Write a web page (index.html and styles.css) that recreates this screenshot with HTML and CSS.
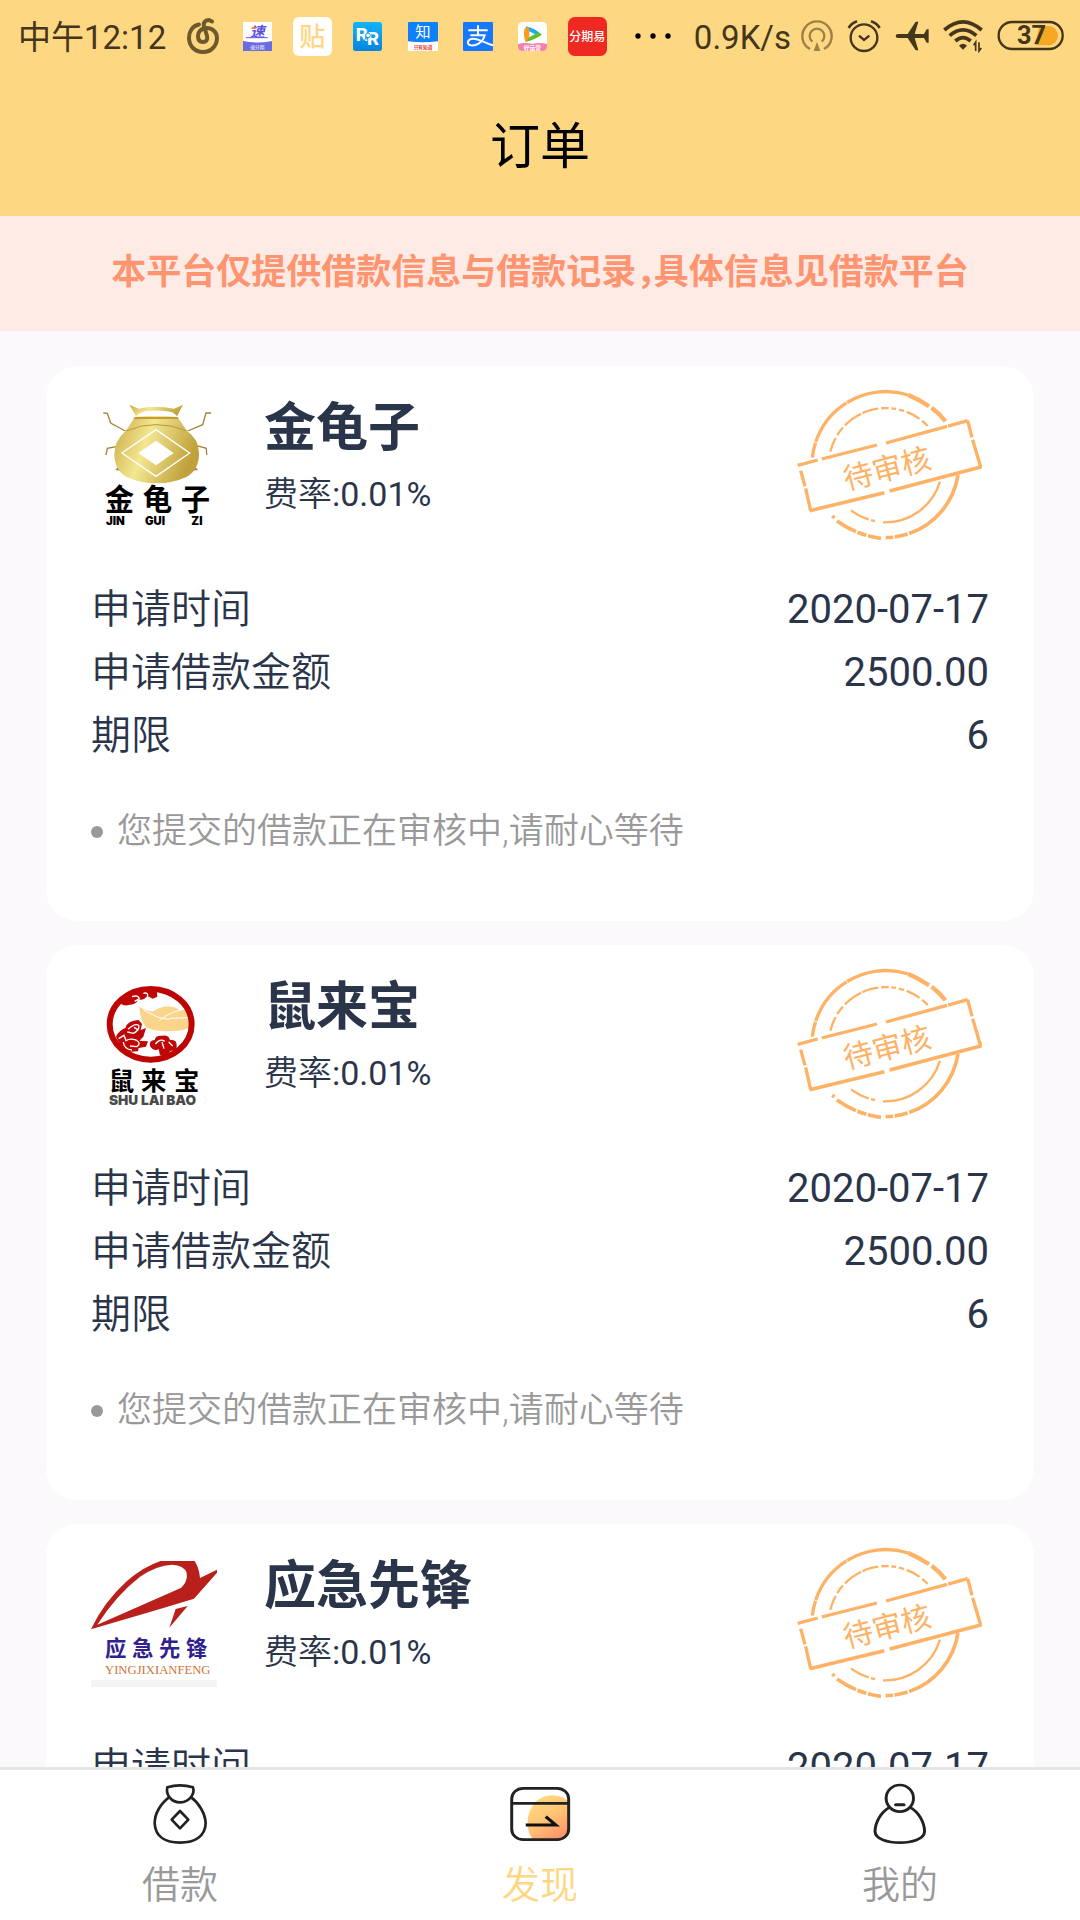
FILE: index.html
```html
<!DOCTYPE html>
<html lang="zh-CN">
<head>
<meta charset="utf-8">
<meta name="viewport" content="width=device-width, initial-scale=1">
<title>订单</title>
<link rel="stylesheet" href="styles.css">
</head>
<body>
<svg class="defs" aria-hidden="true">
  <defs>
    <linearGradient id="gold" x1="0" y1="0" x2="1" y2="0.3">
      <stop offset="0" stop-color="#c9a840"/><stop offset="0.45" stop-color="#f3e792"/><stop offset="1" stop-color="#c0a13c"/>
    </linearGradient>
    <linearGradient id="sun" x1="0.2" y1="0" x2="0.8" y2="1">
      <stop offset="0" stop-color="#ffdc84"/><stop offset="0.5" stop-color="#ffc476"/><stop offset="1" stop-color="#ff9068"/>
    </linearGradient>
    <linearGradient id="sky" x1="0" y1="0" x2="0" y2="1">
      <stop offset="0" stop-color="#12b4fb"/><stop offset="1" stop-color="#0784dc"/>
    </linearGradient>
    <symbol id="stamp" viewBox="60 54 594 468">
      <g fill="none" stroke="#fdb265" stroke-linecap="butt">
        <path d="M124 266A222 222 0 0 1 412 78" stroke-width="10" stroke-dasharray="46 2 152 2 200 3 40"/>
        <path d="M412 78Q445 92 474 112M482 116Q506 134 523 157" stroke-width="13"/>
        <path d="M178 248A172 172 0 0 1 470 171" stroke-width="7" stroke-dasharray="44 10 28 9 60 4 50 9 22 8 14 9 16 8"/>
        <path d="M561 318A222 222 0 0 1 344 506" stroke-width="11" stroke-dasharray="240 5 40 4 90"/>
        <path d="M330 508Q258 499 198 456M190 447L184 441" stroke-width="11" stroke-dasharray="40 5 28 5 70 5"/>
        <path d="M507 338A172 172 0 0 1 336 460" stroke-width="7"/>
        <path d="M312 456Q268 447 236 421" stroke-width="7" stroke-dasharray="12 7 60"/>
        <path d="M80 289L140 273M152 270L318 228M345 222L590 155" stroke-width="10" stroke-dasharray="190 3 90 2"/>
        <path d="M590 155L603 205M605 212L629 294" stroke-width="10"/>
        <path d="M89 305L102 352M104 358L119 425" stroke-width="10"/>
        <path d="M116 425L340 371M356 366L632 293" stroke-width="11" stroke-dasharray="290 2 200 2"/>
      </g>
      <text x="348" y="331" transform="rotate(-14.8 348 298)" text-anchor="middle" font-size="89" fill="#fdb265">待审核</text>
    </symbol>
  </defs>
</svg>

<header class="top">
  <div class="status">
    <span class="status-time">中午12:12</span>
    <ul class="status-apps">
      <li><svg width="32" height="36" viewBox="0 0 32 36"><g fill="none" stroke="#6e592c" stroke-width="4" stroke-linecap="round"><path d="M12 6.500C5 8 2 14 2 20C2 28 8 34 16 34C24 34 30 28 30 20C30 14 25 10 20 10C14 10 11 14 11 18C11 22 13 24 16 24C19 24 21 22 20 18L17 8C16 4 19 2 22 2L25 3.500"/></g></svg></li>
      <li><svg width="29" height="29" viewBox="0 0 87 87"><path fill="#fff" d="M0 0h87v87H0z"/><path fill="#6a6be0" d="M0 57Q43 66 87 57V87H0z"/><text x="22" y="44" font-size="43" font-weight="700" font-style="italic" fill="#5c50e0">速</text><path d="M8 47H74" stroke="#6a58e8" stroke-width="3"/><path d="M26 15h12v6H26z" fill="#f08a3c"/><text x="43" y="80" text-anchor="middle" font-size="14" fill="#fff">速分期</text></svg></li>
      <li><svg width="39" height="39" viewBox="0 0 117 117"><rect width="117" height="117" rx="18" fill="#fff"/><text x="58" y="86" text-anchor="middle" font-size="78" font-weight="500" fill="#fcd885">贴</text></svg></li>
      <li><svg width="29" height="29" viewBox="0 0 87 87"><rect width="87" height="87" rx="8" fill="url(#sky)"/><text x="8" y="58" font-size="56" font-weight="800" fill="#fff">R</text><text x="42" y="70" font-size="56" font-weight="800" fill="#fff">R</text><path d="M30 66L54 12" stroke="#0c9aec" stroke-width="3"/><circle cx="45" cy="40" r="7" fill="#fff" stroke="#0c9aec" stroke-width="3"/></svg></li>
      <li><svg width="30" height="29" viewBox="0 0 90 87"><rect width="90" height="87" rx="3" fill="#0f80f5"/><path d="M0 58Q45 64 90 58V87H0z" fill="#fff"/><text x="45" y="46" text-anchor="middle" font-size="46" fill="#fff">知</text><text x="45" y="80" text-anchor="middle" font-size="14" font-weight="700" fill="#e5372c">只有知道</text></svg></li>
      <li><svg width="30" height="29" viewBox="0 0 90 87"><rect width="90" height="87" rx="4" fill="#1677ff"/><g fill="none" stroke="#fff" stroke-width="6"><path d="M16 25H74M45 10V40M22 40H65C60 62 38 72 24 70C8 67 14 50 30 50C50 50 66 64 90 70"/></g></svg></li>
      <li><svg width="29" height="29" viewBox="0 0 87 87"><rect width="87" height="87" rx="14" fill="#fff"/><path d="M25 13Q18 36 23 54Q45 52 70 37Q48 18 25 13z" fill="#22a9f0"/><path d="M20 18Q15 40 22 59Q30 60 38 53L32 16z" fill="#ff9a1f"/><path d="M24 58Q46 55 72 38L60 31L36 46z" fill="#58c322"/><path d="M34 28V46L51 37z" fill="#fff"/><path d="M0 66Q22 60 43 66Q64 60 87 66V73Q87 87 73 87H14Q0 87 0 73z" fill="#f77fae"/><text x="43" y="83" text-anchor="middle" font-size="17" font-weight="700" fill="#fff">好运营</text></svg></li>
      <li><svg width="39" height="39" viewBox="0 0 117 117"><rect width="117" height="117" rx="20" fill="#ef2922"/><text x="58" y="71" text-anchor="middle" font-size="36" font-weight="500" fill="#fff">分期易</text></svg></li>
    </ul>
    <svg class="status-more" width="36" height="8" viewBox="0 0 108 24"><circle cx="9" cy="12" r="8"/><circle cx="54" cy="12" r="8"/><circle cx="99" cy="12" r="8"/></svg>
    <span class="status-speed">0.9K/s</span>
    <div class="status-system">
      <svg width="32" height="32" viewBox="0 0 96 96" fill="none" stroke="#9b8146" stroke-width="7"><path d="M27 87A44 44 0 1 1 69 87"/><path d="M34 65A22 22 0 1 1 62 65"/><path d="M48 66L58 93H38z" fill="#9b8146" stroke="none"/></svg>
      <svg width="34" height="34" viewBox="0 0 102 102" fill="none" stroke="#43361b" stroke-width="7"><circle cx="51" cy="56" r="40"/><path d="M36 50L51 63L67 50"/><path d="M5 27Q14 12 30 7M72 7Q89 12 98 27" stroke-width="8"/></svg>
      <svg width="34" height="30" viewBox="0 0 102 90" fill="#43361b"><path d="M2 45Q2 39 9 39H38L62 2H70L59 39H87L95 25H101V65H95L87 51H59L70 88H62L38 51H9Q2 51 2 45z"/></svg>
      <svg width="40" height="34" viewBox="0 0 120 102" fill="none" stroke="#43361b" stroke-width="11"><path d="M4 33Q60 -16 116 33M20 50Q60 15 100 50M37 66Q60 46 83 66"/><path d="M48 80Q60 68 72 80L60 92z" fill="#43361b" stroke="none"/><path d="M98 96V70L92 79M108 70V96L115 87" stroke-width="5"/></svg>
      <svg width="68" height="32" viewBox="0 0 204 96"><path d="M126 18H154A29 29 0 0 1 154 76H116z" fill="#f6a723"/><rect x="5" y="6" width="192" height="81" rx="40" fill="none" stroke="#43361b" stroke-width="7"/><text x="60" y="73" font-size="76" font-weight="700" fill="#43361b">37</text></svg>
    </div>
  </div>
  <h1 class="title">订单</h1>
</header>

<p class="notice">本平台仅提供借款信息与借款记录<span class="half">，</span>具体信息见借款平台</p>

<main class="orders">
  <article class="card">
    <div class="card-head">
      <svg class="logo" viewBox="153 132 378 378" role="img" aria-label="金龟子">
        <g fill="none" stroke="#a4843a" stroke-width="4"><path d="M190 162L202 163L212 192L256 216M513 162H498L488 197L443 216M198 288L202 268L232 262M500 288L499 268L470 260"/></g>
        <path d="M226 333L240 318L246 336zM474 333L460 318L454 336z" fill="#a4843a"/>
        <path d="M268 137L296 149Q348 137 402 149L429 137L411 172Q402 158 380 157Q348 152 318 157Q300 160 288 172z" fill="url(#gold)"/>
        <path d="M285 174Q348 168 413 174L440 215Q477 240 477 284Q477 334 437 355Q398 373 350 373Q300 373 262 355Q223 334 223 284Q223 245 258 215z" fill="url(#gold)"/>
        <path d="M284 174H414V180H280z" fill="#c79b2f"/>
        <path d="M258 216Q345 178 440 215" fill="none" stroke="#b89b3c" stroke-width="3"/>
        <path d="M348 212L449 282L348 352L246 282z" fill="none" stroke="#fff" stroke-width="4"/>
        <path d="M348 245L401 282L348 319L295 282z" fill="#fff"/>
        <text x="194 308 422" y="453" font-size="88" font-weight="700">金龟子</text>
        <g font-family="Inter" font-weight="900" font-size="34"><text x="198" y="497">JIN</text><text x="315" y="497">GUI</text><text x="454" y="497">ZI</text></g>
      </svg>
      <div class="info">
        <h2 class="name">金龟子</h2>
        <p class="rate">费率<span class="figure">:0.01%</span></p>
      </div>
      <svg class="stamp" role="img" aria-label="待审核"><use href="#stamp"/></svg>
    </div>
    <dl class="details">
      <div class="row"><dt>申请时间</dt><dd>2020-07-17</dd></div>
      <div class="row"><dt>申请借款金额</dt><dd>2500.00</dd></div>
      <div class="row"><dt>期限</dt><dd>6</dd></div>
    </dl>
    <p class="hint">您提交的借款正在审核中,请耐心等待</p>
  </article>

  <article class="card">
    <div class="card-head">
      <svg class="logo" viewBox="153 126 378 378" role="img" aria-label="鼠来宝">
        <path d="M298 200Q315 212 340 214Q358 200 385 199Q408 200 420 212L450 206V262Q430 274 395 273Q345 276 318 262Q300 240 298 200z" fill="#fad48b"/>
        <path d="M310 210L352 231L388 239M420 210Q380 222 358 242M388 235L445 233" fill="none" stroke="#fff" stroke-width="3"/>
        <ellipse cx="332" cy="253" rx="123" ry="106" fill="none" stroke="#be0505" stroke-width="18"/>
        <path d="M240 190Q258 160 300 150H350L352 170L338 176L322 168Q312 182 294 178Q290 194 270 194Q250 200 240 190zM228 290Q236 272 256 264Q262 242 296 240L306 252L302 270L318 264L310 290L298 302L324 304L318 320L296 324L294 334L262 336Q240 318 228 290z" fill="#c00707"/>
        <path d="M330 318Q326 302 344 300Q346 286 366 287Q386 284 390 300Q410 298 410 315Q412 334 392 332L382 344L360 346L356 328Q340 334 330 318z" fill="#c00707"/>
        <path d="M276 170Q294 164 298 176L284 184M310 160Q326 156 322 170M264 268Q285 248 296 256Q300 270 280 280L262 276M236 296L252 286L258 302Q270 294 288 300Q306 310 290 320L270 318M250 306Q252 328 276 330M346 312Q360 294 374 304M372 326L366 306M386 306L398 318M282 262L292 268" fill="none" stroke="#fff" stroke-width="4"/>
        <g font-size="76" font-weight="700"><text x="206" y="450">鼠</text><text x="303" y="450">来</text><text x="402" y="450">宝</text></g>
        <text x="207" y="496" font-family="Inter" font-size="41" font-weight="900" fill="#4b4b4b">SHU LAI BAO</text>
      </svg>
      <div class="info">
        <h2 class="name">鼠来宝</h2>
        <p class="rate">费率<span class="figure">:0.01%</span></p>
      </div>
      <svg class="stamp" role="img" aria-label="待审核"><use href="#stamp"/></svg>
    </div>
    <dl class="details">
      <div class="row"><dt>申请时间</dt><dd>2020-07-17</dd></div>
      <div class="row"><dt>申请借款金额</dt><dd>2500.00</dd></div>
      <div class="row"><dt>期限</dt><dd>6</dd></div>
    </dl>
    <p class="hint">您提交的借款正在审核中,请耐心等待</p>
  </article>

  <article class="card">
    <div class="card-head">
      <svg class="logo" viewBox="153 123 378 378" role="img" aria-label="应急先锋">
        <path fill-rule="evenodd" d="M153 328Q190 248 260 184Q310 140 362 123H464Q478 146 480 174L531 149V158L462 236L350 270zM172 314L424 203Q444 184 440 158Q432 136 396 134Q350 136 300 170Q228 226 172 314z" fill="#b9201c"/>
        <path d="M407 267L443 258L388 323z" fill="#b9201c"/>
        <path d="M153 480H531V501H153z" fill="#f4f4f4"/>
        <text x="195 276 357 438" y="407" font-size="64" font-weight="700" fill="#31218e">应急先锋</text>
        <text x="195" y="461" font-family="Liberation Serif" font-size="38" fill="#cd7434">YINGJIXIANFENG</text>
      </svg>
      <div class="info">
        <h2 class="name">应急先锋</h2>
        <p class="rate">费率<span class="figure">:0.01%</span></p>
      </div>
      <svg class="stamp" role="img" aria-label="待审核"><use href="#stamp"/></svg>
    </div>
    <dl class="details">
      <div class="row"><dt>申请时间</dt><dd>2020-07-17</dd></div>
      <div class="row"><dt>申请借款金额</dt><dd>2500.00</dd></div>
      <div class="row"><dt>期限</dt><dd>6</dd></div>
    </dl>
    <p class="hint">您提交的借款正在审核中,请耐心等待</p>
  </article>
</main>

<nav class="tabs">
  <a class="tab" href="#loan">
    <svg class="tab-icon" viewBox="324 120 192 204" fill="none" stroke="#222" stroke-width="8" stroke-linejoin="round"><path d="M382 142Q420 130 459 142C465 160 450 187 421 187C392 187 377 162 382 142z"/><path d="M390 170C362 190 344 220 344 250C346 290 376 308 420 308C466 308 496 288 497 250C496 220 476 188 451 170"/><path d="M420 213L445 239L420 265L395 239z"/></svg>
    <span>借款</span>
  </a>
  <a class="tab tab-active" href="#discover" aria-current="page">
    <svg class="tab-icon" viewBox="22 120 173 204" preserveAspectRatio="none" fill="none" stroke="#222" stroke-width="8"><path d="M90 299C66 268 72 212 98 184C122 160 162 160 186 184V262Q184 299 153 299z" fill="url(#sun)" stroke="none"/><rect x="32" y="145" width="154" height="154" rx="31"/><path d="M32 190H186"/><path d="M70 255H151L124 230" stroke="#111" stroke-width="9"/></svg>
    <span>发现</span>
  </a>
  <a class="tab" href="#mine">
    <svg class="tab-icon" viewBox="996 120 173 204" preserveAspectRatio="none" fill="none" stroke="#222" stroke-width="8"><ellipse cx="1082" cy="175" rx="37" ry="40"/><path d="M1054 202C1032 216 1016 244 1015 274C1016 298 1050 308 1082 308C1114 308 1148 298 1149 274C1148 244 1132 216 1110 202"/><path d="M1071 194H1093" stroke-width="9" stroke-linecap="round"/></svg>
    <span>我的</span>
  </a>
</nav>
</body>
</html>
```
FILE: styles.css
```css
* {
  box-sizing: border-box;
  margin: 0;
  padding: 0;
}

body {
  display: flex;
  flex-direction: column;
  height: 100vh;
  background: #fbf9fc;
  color: #2b354a;
  font-family: Roboto, "Noto Sans CJK SC", sans-serif;
}

.defs {
  position: absolute;
  width: 0;
  height: 0;
}

.top {
  flex: none;
  background: #fed783;
}

.status {
  display: flex;
  align-items: center;
  height: 72px;
  padding: 0 15px 0 18px;
  color: #43361b;
  font-size: 33px;
  line-height: 40px;
}

.status-time,
.status-speed {
  padding-top: 4px;
}

.status-time {
  width: 157px;
  white-space: nowrap;
}

.status-apps {
  display: flex;
  list-style: none;
}

.status-apps li {
  display: flex;
  align-items: center;
  justify-content: center;
  width: 55px;
}

.status-more {
  margin-left: 20px;
  fill: #000;
}

.status-speed {
  margin-left: auto;
}

.status-system {
  display: flex;
  align-items: center;
  gap: 14px;
  margin-left: 10px;
}

.title {
  padding: 39px 0 33px;
  color: #000;
  font-size: 50px;
  font-weight: 400;
  line-height: 72px;
  text-align: center;
}

.notice {
  flex: none;
  padding: 32px 0 33px;
  background: #ffebe5;
  color: #fe9470;
  font-size: 35px;
  font-weight: 700;
  line-height: 50px;
  text-align: center;
}

.half {
  font-feature-settings: "halt";
}

.orders {
  display: grid;
  flex: 1;
  align-content: start;
  gap: 24px;
  min-height: 0;
  padding: 35px 46px;
  overflow-y: auto;
  scrollbar-width: none;
}

.card {
  padding: 21px 45px 64px;
  border-radius: 32px;
  background: #fff;
}

.card-head {
  display: flex;
  align-items: flex-start;
}

.logo {
  width: 126px;
  height: 126px;
  margin-top: 16px;
}

.info {
  flex: 1;
  padding: 8px 0 0 47px;
}

.name {
  font-size: 52px;
  font-weight: 700;
  line-height: 68px;
}

.rate {
  margin-top: 6px;
  font-size: 34px;
  line-height: 50px;
}

.stamp {
  width: 198px;
  height: 156px;
}

.details {
  margin-top: 35px;
  font-size: 40px;
  line-height: 63px;
}

.row {
  display: flex;
  justify-content: space-between;
}

.row dt,
.rate,
.hint,
.tab {
  font-weight: 350;
}

.figure {
  font-weight: 400;
}

.hint {
  display: flex;
  align-items: center;
  gap: 14px;
  margin-top: 40px;
  color: #999;
  font-size: 35px;
  line-height: 50px;
}

.hint::before {
  width: 12px;
  height: 12px;
  border-radius: 50%;
  background: #999;
  content: "";
}

.tabs {
  display: flex;
  flex: none;
  border-top: 3px solid #e6e6e6;
  background: #fff;
}

.tab {
  display: flex;
  flex: 1;
  flex-direction: column;
  align-items: center;
  padding: 10px 0 7px;
  color: #999;
  font-size: 38px;
  line-height: 56px;
  text-decoration: none;
}

.tab-icon {
  width: 64px;
  height: 68px;
  margin-bottom: 9px;
}

.tab-active {
  color: #fed783;
}
```
